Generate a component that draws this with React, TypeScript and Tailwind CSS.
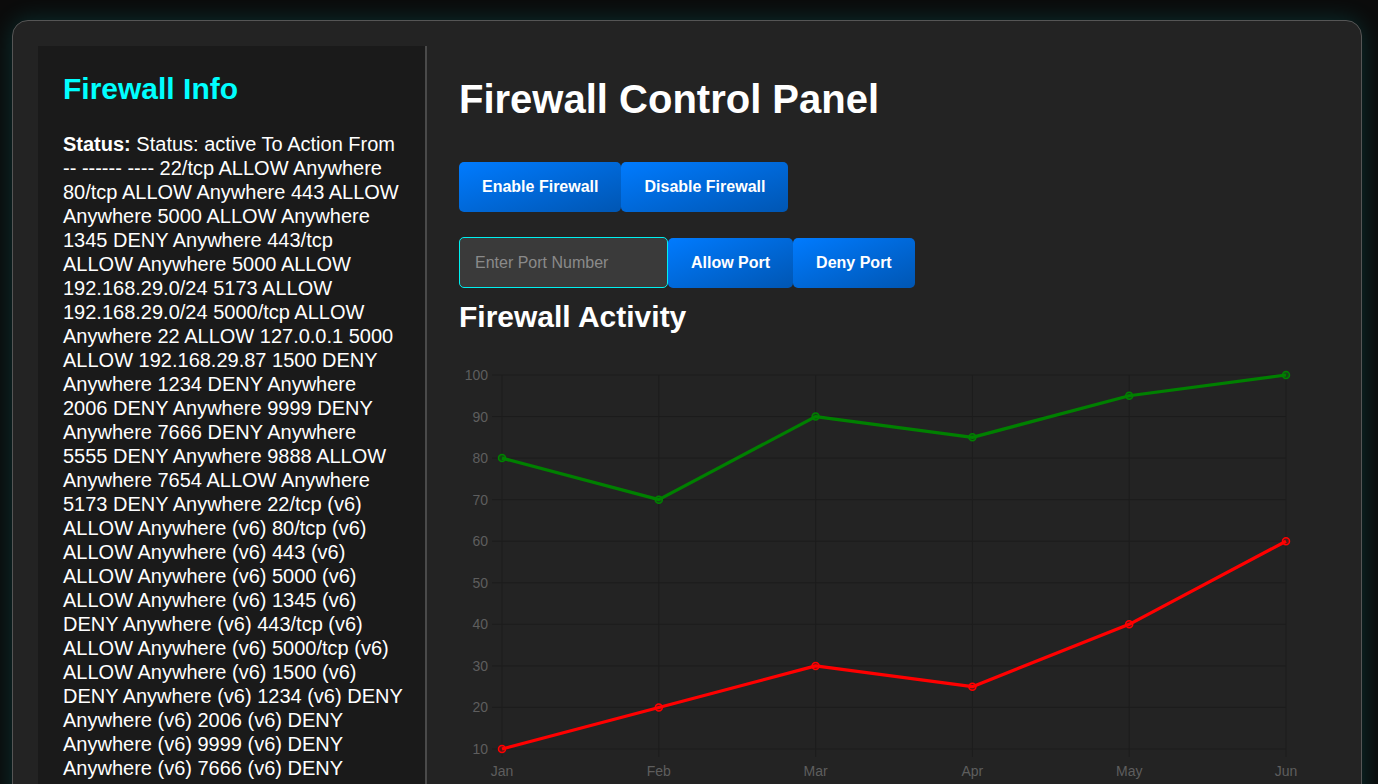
import React from 'react';

const rules =
  'Status: active To Action From -- ------ ---- 22/tcp ALLOW Anywhere 80/tcp ALLOW Anywhere 443 ALLOW Anywhere 5000 ALLOW Anywhere 1345 DENY Anywhere 443/tcp ALLOW Anywhere 5000 ALLOW 192.168.29.0/24 5173 ALLOW 192.168.29.0/24 5000/tcp ALLOW Anywhere 22 ALLOW 127.0.0.1 5000 ALLOW 192.168.29.87 1500 DENY Anywhere 1234 DENY Anywhere 2006 DENY Anywhere 9999 DENY Anywhere 7666 DENY Anywhere 5555 DENY Anywhere 9888 ALLOW Anywhere 7654 ALLOW Anywhere 5173 DENY Anywhere 22/tcp (v6) ALLOW Anywhere (v6) 80/tcp (v6) ALLOW Anywhere (v6) 443 (v6) ALLOW Anywhere (v6) 5000 (v6) ALLOW Anywhere (v6) 1345 (v6) DENY Anywhere (v6) 443/tcp (v6) ALLOW Anywhere (v6) 5000/tcp (v6) ALLOW Anywhere (v6) 1500 (v6) DENY Anywhere (v6) 1234 (v6) DENY Anywhere (v6) 2006 (v6) DENY Anywhere (v6) 9999 (v6) DENY Anywhere (v6) 7666 (v6) DENY Anywhere (v6) 5555 (v6) DENY Anywhere (v6) 9888 (v6) ALLOW Anywhere (v6) 7654 (v6) ALLOW Anywhere (v6) 5173 (v6) DENY Anywhere (v6)';

const months = ['Jan', 'Feb', 'Mar', 'Apr', 'May', 'Jun'];
const allowed = [80, 70, 90, 85, 95, 100];
const blocked = [10, 20, 30, 25, 40, 60];
const ticks = [100, 90, 80, 70, 60, 50, 40, 30, 20, 10];

// plot area inside the svg
const X0 = 43;
const X1 = 827;
const Y0 = 29; // value 100
const Y1 = 403; // value 10

const px = (i: number) => X0 + ((X1 - X0) / 5) * i;
const py = (v: number) => Y0 + ((100 - v) / 90) * (Y1 - Y0);

function ActivityChart() {
  const line = (data: number[]) => data.map((v, i) => `${px(i)},${py(v)}`).join(' ');

  return (
    <svg width="845" height="440" className="block mt-[12px]" fontFamily="'Liberation Sans', Arial, sans-serif">
      {/* grid */}
      {ticks.map((t) => (
        <g key={t}>
          <line x1={X0 - 10} x2={X1} y1={py(t)} y2={py(t)} stroke="#1c1c1c" strokeWidth="1" />
          <text x={29} y={py(t) + 5} textAnchor="end" fontSize="14" fill="#5e5e5e">
            {t}
          </text>
        </g>
      ))}
      {months.map((m, i) => (
        <g key={m}>
          <line x1={px(i)} x2={px(i)} y1={Y0} y2={Y1 + 8} stroke="#1c1c1c" strokeWidth="1" />
          <text x={px(i)} y={430} textAnchor="middle" fontSize="14" fill="#5e5e5e">
            {m}
          </text>
        </g>
      ))}

      {/* allowed */}
      <polyline points={line(allowed)} fill="none" stroke="#008000" strokeWidth="3.2" strokeLinejoin="round" />
      {allowed.map((v, i) => (
        <circle key={i} cx={px(i)} cy={py(v)} r="3.5" fill="rgba(0,128,0,0.4)" stroke="#008000" strokeWidth="1.5" />
      ))}

      {/* blocked */}
      <polyline points={line(blocked)} fill="none" stroke="#ff0000" strokeWidth="3.2" strokeLinejoin="round" />
      {blocked.map((v, i) => (
        <circle key={i} cx={px(i)} cy={py(v)} r="3.5" fill="rgba(255,0,0,0.25)" stroke="#ff0000" strokeWidth="1.5" />
      ))}
    </svg>
  );
}

const btn =
  'h-[50px] px-[23px] rounded-[5px] bg-linear-to-br from-[#007bff] to-[#0056b3] text-white text-[16px] font-bold';

export default function App() {
  return (
    <div className="h-screen overflow-hidden bg-[#0b0b0b] font-['Liberation_Sans',Arial,sans-serif] text-white">
      <div className="mt-[20px] ml-[12px] w-[1350px] flex rounded-[16px] border border-[#555] bg-[#232323] p-[25px] shadow-[0_0_25px_rgba(0,255,255,0.15)]">
        {/* Sidebar */}
        <aside className="w-[389px] shrink-0 bg-[#1a1a1a] border-r-2 border-[#4a4a4a] pl-[25px] pr-[22px] pt-[26px] pb-[25px]">
          <h2 className="text-[30px] leading-[normal] font-bold text-[#00ffff] mb-[26px]">Firewall Info</h2>
          <p className="text-[20px] leading-[24px]">
            <strong>Status:</strong> {rules}
          </p>
        </aside>

        {/* Main */}
        <main className="flex-1 pl-8 pr-8 pt-[31px]">
          <h1 className="text-[40px] leading-[normal] font-bold">Firewall Control Panel</h1>

          <div className="mt-[40px] flex">
            <button className={btn}>Enable Firewall</button>
            <button className={btn}>Disable Firewall</button>
          </div>

          <div className="mt-[25px] flex items-center">
            <div className="w-[209px] h-[51px] rounded-[5px] border border-[#00f0f0] bg-[#3a3a3a] flex">
              <input
                type="text"
                placeholder="Enter Port Number"
                className="w-full h-full bg-transparent pl-[15px] text-[16px] text-white placeholder:text-[#8a8a8a] outline-none"
              />
            </div>
            <button className={btn}>Allow Port</button>
            <button className={btn}>Deny Port</button>
          </div>

          <h2 className="mt-[12px] text-[30px] leading-[normal] font-bold">Firewall Activity</h2>

          <ActivityChart />
        </main>
      </div>
    </div>
  );
}
